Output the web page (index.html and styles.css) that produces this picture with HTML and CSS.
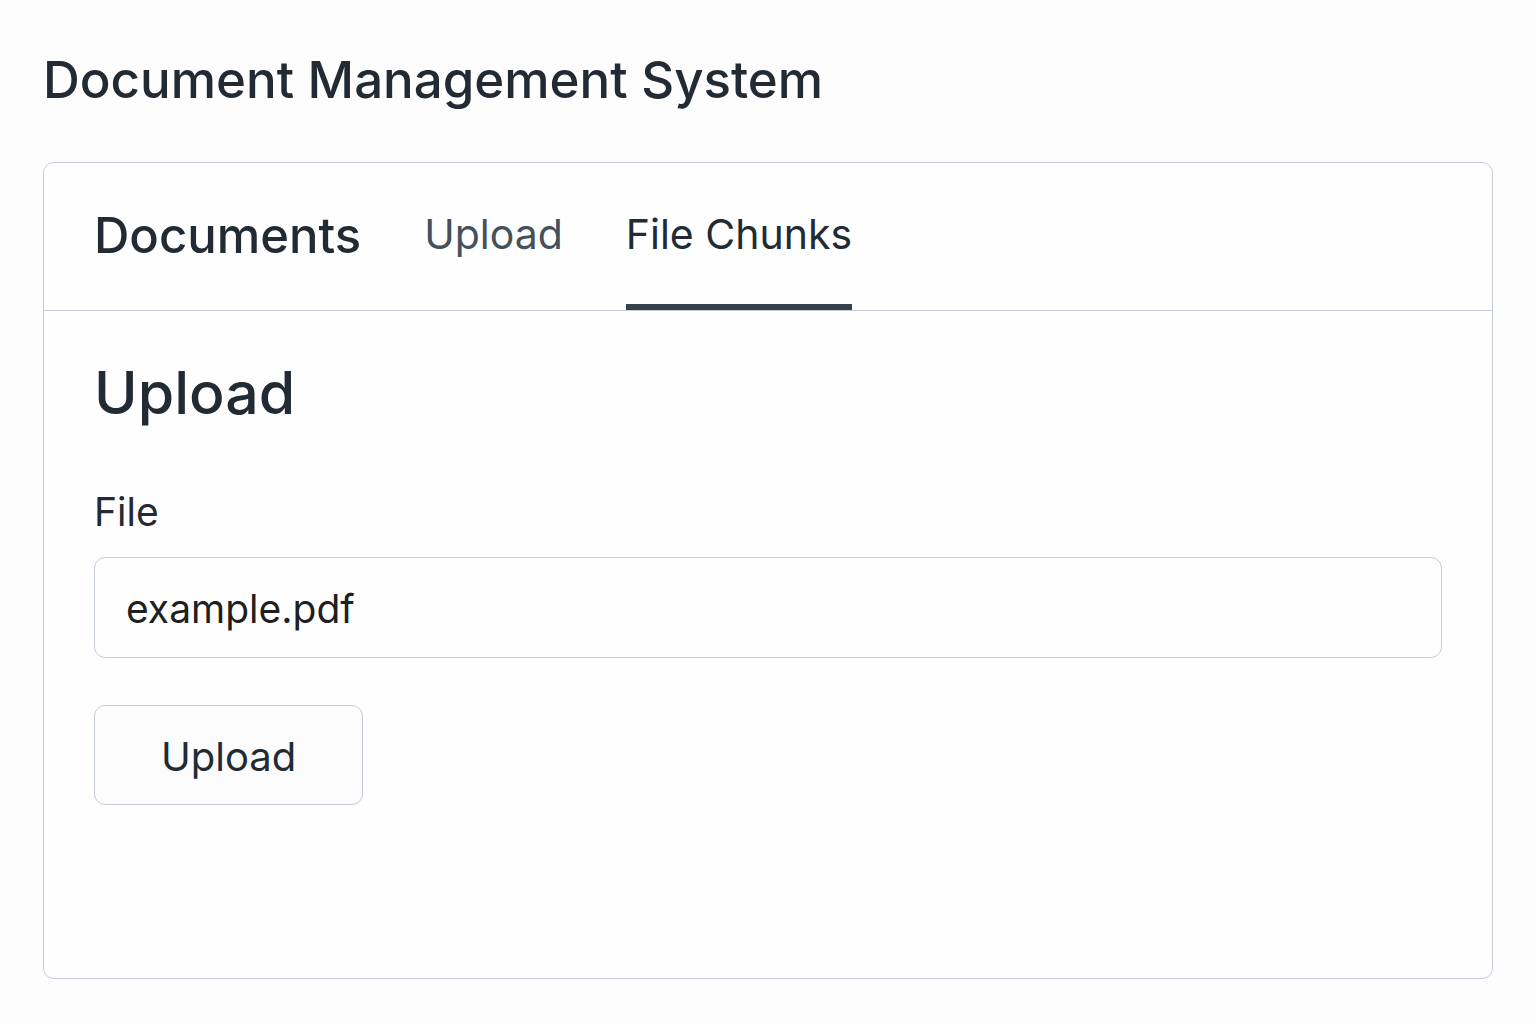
FILE: index.html
```
<!DOCTYPE html>
<html lang="en">
<head>
<meta charset="utf-8">
<meta name="viewport" content="width=device-width, initial-scale=1">
<title>Document Management System</title>
<link rel="stylesheet" href="styles.css">
</head>
<body>
<h1 class="page-title">Document Management System</h1>
<main class="panel">
  <nav class="tabs" aria-label="Sections">
    <a class="tab tab-primary" href="#documents">Documents</a>
    <a class="tab tab-muted" href="#upload">Upload</a>
    <a class="tab tab-active" href="#chunks" aria-current="page">File Chunks</a>
  </nav>
  <form class="upload" id="upload">
    <h2 class="section-title">Upload</h2>
    <label class="label" for="file">File</label>
    <input class="field" id="file" type="text" value="example.pdf">
    <button class="button" type="button">Upload</button>
  </form>
</main>
</body>
</html>
```
FILE: styles.css
```
* {
  box-sizing: border-box;
}

body {
  margin: 0;
  min-height: 100vh;
  padding: 48px 43px 45px;
  display: flex;
  flex-direction: column;
  background: #fdfdfd;
  color: #222b34;
  font-family: Inter, "Liberation Sans", sans-serif;
}

.page-title {
  margin: 0 0 50px;
  font-size: 51px;
  line-height: 64px;
  font-weight: 500;
}

.panel {
  flex: 1;
  border: 1px solid #c6cdd8;
  border-radius: 11px;
  background: #fefefe;
}

.tabs {
  display: flex;
  gap: 63px;
  height: 148px;
  padding: 0 50px;
  border-bottom: 1px solid #c6cdd8;
}

.tab {
  padding-top: 39px;
  color: inherit;
  font-size: 41px;
  line-height: 64px;
  text-decoration: none;
}

.tab-primary {
  font-size: 49px;
  line-height: 68px;
  font-weight: 500;
}

.tab-muted {
  color: #465059;
}

.tab-active {
  border-bottom: 6px solid #36414a;
}

.upload {
  display: flex;
  flex-direction: column;
  align-items: flex-start;
  padding: 46px 50px;
}

.section-title {
  margin: 0 0 59px;
  font-size: 59px;
  line-height: 72px;
  font-weight: 500;
}

.label {
  margin-bottom: 21px;
  font-size: 39px;
  line-height: 48px;
}

.field {
  width: 100%;
  height: 101px;
  margin-bottom: 47px;
  padding: 2px 31px 0;
  border: 1px solid #c6cdd8;
  border-radius: 11px;
  background: #fefefe;
  color: #1f1f1f;
  font: inherit;
  font-size: 39px;
}

.button {
  height: 100px;
  padding: 2px 66px 0;
  border: 1px solid #c6cdd8;
  border-radius: 11px;
  background: #fcfcfc;
  color: inherit;
  font: inherit;
  font-size: 40px;
}
```
